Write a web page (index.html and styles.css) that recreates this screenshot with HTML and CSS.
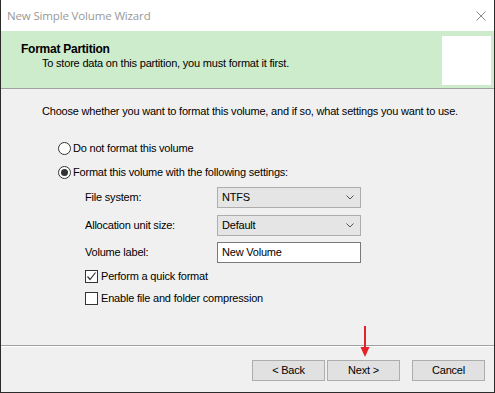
FILE: index.html
```html
<!DOCTYPE html>
<html lang="en">
<head>
<meta charset="UTF-8">
<title>New Simple Volume Wizard</title>
<link rel="stylesheet" href="styles.css">
</head>
<body>
<div class="window">
  <div class="titlebar">
    <span class="title">New Simple Volume Wizard</span>
    <svg class="close" width="10" height="10" viewBox="0 0 10 10"><path d="M0.5 0.5 L9.5 9.5 M9.5 0.5 L0.5 9.5" stroke="#8a8a8a" stroke-width="1"/></svg>
  </div>

  <div class="header">
    <div class="header-text">
      <div class="header-title">Format Partition</div>
      <div class="header-sub">To store data on this partition, you must format it first.</div>
    </div>
    <div class="header-icon"></div>
  </div>

  <div class="content">
    <p class="intro">Choose whether you want to format this volume, and if so, what settings you want to use.</p>

    <div class="option"><span class="radio"></span>Do not format this volume</div>
    <div class="option"><span class="radio checked"></span>Format this volume with the following settings:</div>

    <div class="settings">
      <div class="row">
        <span class="label">File system:</span>
        <div class="select">NTFS<svg class="chev" width="8" height="5" viewBox="0 0 8 5"><path d="M0.5 0.5 L4 4 L7.5 0.5" fill="none" stroke="#555" stroke-width="1"/></svg></div>
      </div>
      <div class="row">
        <span class="label">Allocation unit size:</span>
        <div class="select">Default<svg class="chev" width="8" height="5" viewBox="0 0 8 5"><path d="M0.5 0.5 L4 4 L7.5 0.5" fill="none" stroke="#555" stroke-width="1"/></svg></div>
      </div>
      <div class="row">
        <span class="label">Volume label:</span>
        <div class="textbox">New Volume</div>
      </div>

      <div class="check-row first"><span class="checkbox"><svg width="11" height="11" viewBox="0 0 11 11"><path d="M1.5 5.5 L4 8.5 L9.5 1.5" fill="none" stroke="#333" stroke-width="1.2"/></svg></span>Perform a quick format</div>
      <div class="check-row"><span class="checkbox"></span>Enable file and folder compression</div>
    </div>
  </div>

  <div class="footer">
    <div class="btn">&lt; Back</div>
    <div class="btn">Next &gt;</div>
    <div class="btn cancel">Cancel</div>
    <svg class="arrow" width="10" height="32" viewBox="0 0 10 32"><path d="M5 0 L5 22" stroke="#e3212b" stroke-width="2"/><path d="M0.5 21 L9.5 21 L5 31 Z" fill="#e3212b"/></svg>
  </div>
</div>
</body>
</html>
```

FILE: styles.css
```css
body {
  margin: 0;
  font-family: "Liberation Sans", Arial, sans-serif;
  font-size: 11px;
  line-height: 13px;
  letter-spacing: -0.2px;
  color: #000;
}
.window {
  width: 495px;
  height: 393px;
  box-sizing: border-box;
  border: 1px solid #2b2b2b;
  border-top: none;
  background: #f0f0f0;
  display: flex;
  flex-direction: column;
  position: relative;
}
.titlebar {
  height: 31px;
  background: #fff;
  display: flex;
  align-items: center;
  justify-content: space-between;
  padding: 0 8px 0 6px;
}
.title {
  font-family: "Open Sans", "Noto Sans", sans-serif;
  font-size: 11.5px;
  letter-spacing: -0.15px;
  color: #999;
}
.header {
  height: 58px;
  background: #cdeccc;
  border-bottom: 1px solid #a0a0a0;
  display: flex;
  justify-content: space-between;
  padding: 5px 3px 0 20px;
  box-sizing: border-box;
}
.header-text {
  padding-top: 6px;
}
.header-title {
  font-weight: bold;
  font-size: 12px;
  line-height: 14px;
  letter-spacing: -0.25px;
}
.header-sub {
  margin-left: 21px;
  line-height: 14px;
}
.header-icon {
  width: 49px;
  height: 49px;
  background: #fff;
}
.content {
  flex: 1;
  padding: 16px 0 0 41px;
}
.intro {
  margin: 0 0 22px 0;
}
.option {
  display: flex;
  align-items: center;
  height: 17px;
  margin: 0 0 7px 16px;
}
.radio {
  width: 11px;
  height: 11px;
  border: 1px solid #333;
  border-radius: 50%;
  background: #fff;
  margin-right: 2px;
  position: relative;
}
.radio.checked::after {
  content: "";
  position: absolute;
  left: 2px;
  top: 2px;
  width: 7px;
  height: 7px;
  border-radius: 50%;
  background: #333;
}
.settings {
  margin: -1px 0 0 43px;
}
.row {
  display: flex;
  align-items: center;
  height: 21px;
  margin-bottom: 7px;
}
.row:nth-child(2) {
  margin-bottom: 6px;
}
.label {
  width: 132px;
}
.select, .textbox {
  width: 144px;
  height: 21px;
  box-sizing: border-box;
  display: flex;
  align-items: center;
  padding-left: 4px;
}
.select {
  background: #e5e5e5;
  border: 1px solid #adadad;
  justify-content: space-between;
  padding-right: 6px;
}
.textbox {
  background: #fff;
  border: 1px solid #7a7a7a;
}
.check-row {
  display: flex;
  align-items: center;
  height: 13px;
  margin-bottom: 9px;
}
.check-row.first {
  margin-top: 5px;
}
.checkbox {
  width: 11px;
  height: 11px;
  border: 1px solid #333;
  background: #fff;
  margin-right: 3px;
  display: flex;
}
.footer {
  height: 47px;
  border-top: 1px solid #a0a0a0;
  box-shadow: inset 0 1px 0 #fff;
  display: flex;
  justify-content: flex-end;
  align-items: flex-start;
  padding: 14px 9px 0 0;
  box-sizing: border-box;
  position: relative;
}
.btn {
  width: 73px;
  height: 21px;
  box-sizing: border-box;
  background: #e1e1e1;
  border: 1px solid #adadad;
  display: flex;
  align-items: center;
  justify-content: center;
  margin-left: 2px;
}
.btn.cancel {
  margin-left: 12px;
}
.arrow {
  position: absolute;
  left: 359px;
  top: -20px;
}
```
